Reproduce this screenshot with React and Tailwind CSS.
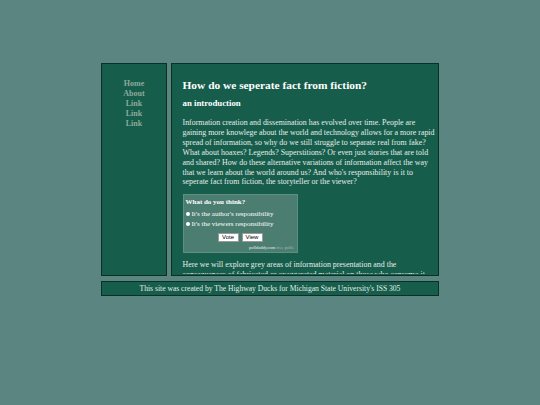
import React from "react";

export default function App() {
  const serif = { fontFamily: '"Liberation Serif", "Times New Roman", serif' };
  const sans = { fontFamily: '"Liberation Sans", Arial, sans-serif' };
  return (
    <div className="min-h-[405px] w-full bg-[#5b8580] pt-[63px]" style={serif}>
      <div className="mx-auto w-[338px] flex flex-col gap-[5px]">
        <div className="flex gap-[4px] h-[213px]">
          <div className="w-[66px] shrink-0 bg-[#165e4b] border-[1.5px] border-[#0c2f26] flex flex-col items-center pt-[15px] text-[8px] leading-[10px] font-bold text-[#8da89c]">
            <span>Home</span>
            <span>About</span>
            <span>Link</span>
            <span>Link</span>
            <span>Link</span>
          </div>
          <div className="flex-1 bg-[#165e4b] border-[1.5px] border-[#0c2f26] overflow-hidden">
            <div className="h-[209.5px] overflow-hidden pl-[10.5px] pr-[1px] pt-[14px] text-[#e6ecea]">
              <h1 className="text-[11.4px] leading-[14px] font-bold text-white">How do we seperate fact from fiction?</h1>
              <h3 className="mt-[6px] text-[8.8px] leading-[11px] font-bold text-white">an introduction</h3>
              <p className="mt-[9px] text-[7.9px] leading-[9.9px]">
                Information creation and dissemination has evolved over time. People are gaining more knowlege about the world and technology allows for a more rapid spread of information, so why do we still struggle to separate real from fake? What about hoaxes? Legends? Superstitions? Or even just stories that are told and shared? How do these alternative variations of information affect the way that we learn about the world around us? And who's responsibility is it to seperate fact from fiction, the storyteller or the viewer?
              </p>
              <div className="mt-[7px] w-[115px] h-[59px] bg-[#4b7d70] border border-[#5f8f82] px-[2px] pt-[3px] text-white">
                <div className="text-[7px] leading-[9px] font-bold">What do you think?</div>
                <div className="mt-[1.5px] flex items-center gap-[1.5px] text-[7px] leading-[10px] font-normal">
                  <span className="w-[4.5px] h-[4.5px] rounded-full bg-white inline-block" />
                  <span>It's the author's responsibility</span>
                </div>
                <div className="flex items-center gap-[1.5px] text-[7px] leading-[10px] font-normal">
                  <span className="w-[4.5px] h-[4.5px] rounded-full bg-white inline-block" />
                  <span>It's the viewers responsibility</span>
                </div>
                <div className="mt-[4px] flex justify-center gap-[3px]">
                  <span className="w-[21px] h-[9px] bg-white border border-[#9a9a9a] text-black text-[6px] leading-[7px] flex items-center justify-center" style={sans}>Vote</span>
                  <span className="w-[21px] h-[9px] bg-white border border-[#9a9a9a] text-black text-[6px] leading-[7px] flex items-center justify-center" style={sans}>View</span>
                </div>
                <div className="mt-[3px] pr-[1px] text-right text-[4.5px] leading-[6px]">
                  <span className="text-[#e8efeb]">polldaddy.com</span> <span className="text-[#9dbdb3]">free polls</span>
                </div>
              </div>
              <p className="mt-[7px] text-[7.9px] leading-[9.9px]">
                Here we will explore grey areas of information presentation and the consequences of fabricated or exaggerated material on those who consume it. We will look at examples from history and the present day.
              </p>
            </div>
          </div>
        </div>
        <div className="h-[15px] bg-[#165e4b] border-[1.5px] border-[#0c2f26] flex items-center justify-center text-[7.6px] leading-[9px] text-[#e6ecea]">
          This site was created by The Highway Ducks for Michigan State University's ISS 305
        </div>
      </div>
    </div>
  );
}
